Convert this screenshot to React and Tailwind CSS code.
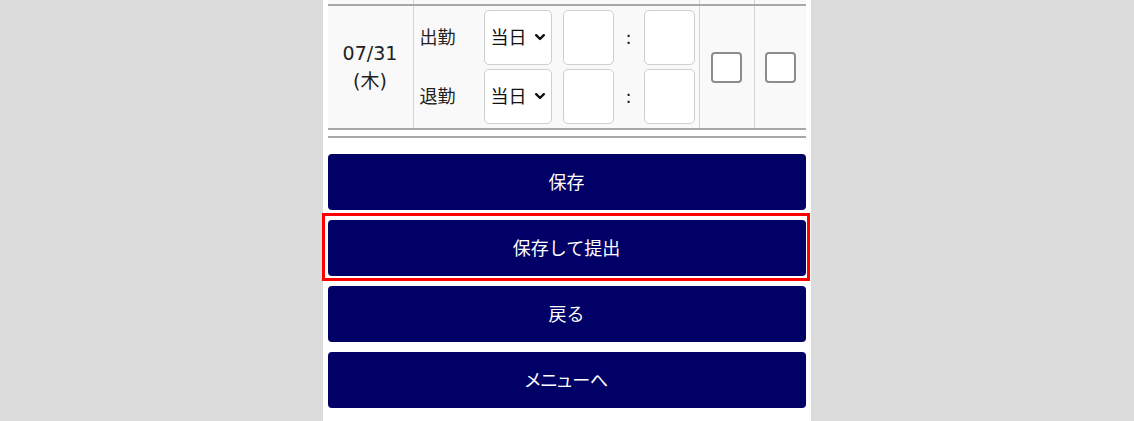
import React from 'react';

const font = { fontFamily: '"DejaVu Sans", "Noto Sans CJK JP", sans-serif' };

const Chevron = () => (
  <svg width="10" height="7" viewBox="0 0 10 7" aria-hidden>
    <path d="M1.2 1.2 L5 5 L8.8 1.2" fill="none" stroke="#111" strokeWidth="2.4" strokeLinecap="round" strokeLinejoin="round" />
  </svg>
);

const TimeLine = ({ label, stub }) => (
  <div className="flex items-center h-[55px]">
    <span className="w-[70px] pl-[6px] text-[18px] text-[#222]">{label}</span>
    <div className="w-[68px] h-[55px] bg-white border border-[#cfcfcf] rounded-[5px] flex items-center pl-[6px] pr-[6px] justify-between">
      {!stub && (
        <>
          <span className="text-[18px] text-[#111]">当日</span>
          <Chevron />
        </>
      )}
    </div>
    <div className="ml-[11px] w-[51px] h-[55px] bg-white border border-[#cfcfcf] rounded-[5px]" />
    <span className="w-[30px] text-center text-[18px] text-[#111]">{stub ? '' : ':'}</span>
    <div className="w-[51px] h-[55px] bg-white border border-[#cfcfcf] rounded-[5px]" />
  </div>
);

// stub = the previous day's row, scrolled almost out of view
const Row = ({ date, day, stub }) => (
  <div className="flex h-[124px] border-b-2 border-[#a8a8a8] bg-[#f9f9f9]">
    <div className="w-[86px] border-r border-[#d4d4d4] flex flex-col items-center justify-center text-[19px] leading-[28px] text-[#222]">
      <span>{date}</span>
      <span>{day}</span>
    </div>
    <div className="w-[286px] border-r border-[#d4d4d4] flex flex-col justify-center gap-[4px]">
      <TimeLine label={stub ? '' : '出勤'} stub={stub} />
      <TimeLine label={stub ? '' : '退勤'} stub={stub} />
    </div>
    <div className="w-[55px] border-r border-[#d4d4d4] flex items-center justify-center">
      <div className="w-[31px] h-[31px] bg-white border-2 border-[#8c8c8c] rounded-[4px]" />
    </div>
    <div className="flex-1 flex items-center justify-center">
      <div className="w-[31px] h-[31px] bg-white border-2 border-[#8c8c8c] rounded-[4px]" />
    </div>
  </div>
);

const buttons = ['保存', '保存して提出', '戻る', 'メニューへ'];

export default function App() {
  return (
    <div className="h-[421px] overflow-hidden bg-[#dcdcdc] flex justify-center" style={font}>
      <div className="w-[488px] bg-white px-[5px] ml-[-1px]">
        <div className="mt-[-118px]">
          <Row stub />
          <Row date="07/31" day="(木)" />
        </div>
        <div className="mt-[6px] h-[2px] bg-[#a8a8a8]" />
        <div className="mt-[16px] flex flex-col gap-[10px]">
          {buttons.map((b, i) => (
            <div key={b} className="relative">
              {i === 1 && (
                <span className="absolute left-[-6px] right-[-4px] top-[-7px] bottom-[-5px] border-[3px] border-[#ff0000]" />
              )}
              <button
                className={
                  'relative w-[478px] h-[56px] rounded-[4px] bg-[#000066] text-white text-[18px]' +
                  (i === 3 ? ' [font-feature-settings:"palt"]' : '')
                }
              >
                {b}
              </button>
            </div>
          ))}
        </div>
      </div>
    </div>
  );
}
